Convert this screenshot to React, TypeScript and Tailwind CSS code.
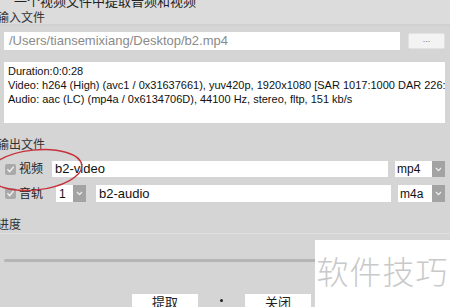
import React from "react";

const font = { fontFamily: '"Liberation Sans", "Noto Sans CJK SC", sans-serif' };

function Check() {
  return (
    <div className="w-[11px] h-[11px] rounded-[2px] bg-[#a9a9a9] flex items-center justify-center shrink-0">
      <svg width="9" height="9" viewBox="0 0 10 10">
        <path d="M2 5.2 L4.2 7.4 L8.2 2.4" stroke="#f2f2f2" strokeWidth="1.6" fill="none" strokeLinecap="round" strokeLinejoin="round" />
      </svg>
    </div>
  );
}

function Arrow() {
  return (
    <div className="w-[13px] self-stretch bg-[#a3a3a3] flex items-center justify-center">
      <svg width="7" height="5" viewBox="0 0 7 5">
        <path d="M1 1 L3.5 3.6 L6 1" stroke="#f0f0f0" strokeWidth="1.2" fill="none" />
      </svg>
    </div>
  );
}

export default function App() {
  return (
    <div className="relative w-[450px] h-[307px] overflow-hidden bg-[#d5d5d5]" style={font}>
      <div className="bg-[#dcdcdc]">
        <div className="h-[12px] overflow-hidden">
          <div className="text-[13px] leading-[13px] -mt-[5px] pl-[14px] text-[#222]">一个视频文件中提取音频和视频</div>
        </div>
        <div className="h-[12px] text-[12px] leading-[12px] -ml-[3px] text-[#333]">输入文件</div>
      </div>
      <div className="h-[2px] bg-[#d0d0d0]" />

      <div className="flex items-center mt-[6px] h-[18px] pl-[4px] pr-[5px]">
        <div className="w-[396px] h-[18px] bg-white flex items-center pl-[5px] text-[13px] text-[#8a8a8a]">
          /Users/tiansemixiang/Desktop/b2.mp4
        </div>
        <div className="ml-[8px] w-[37px] h-[16px] bg-[#f3f3f3] border border-[#e2e2e2] rounded-[2px] flex items-center justify-center text-[9px] text-[#777] leading-none pb-[3px]">
          ...
        </div>
      </div>

      <div className="mt-[12px] mx-[4px] mr-[5px] h-[61px] bg-white overflow-hidden pl-[4px] pt-[2px] text-[11px] leading-[14px] text-[#111] whitespace-nowrap">
        <div>Duration:0:0:28</div>
        <div>Video: h264 (High) (avc1 / 0x31637661), yuv420p, 1920x1080 [SAR 1017:1000 DAR 226:</div>
        <div>Audio: aac (LC) (mp4a / 0x6134706D), 44100 Hz, stereo, fltp, 151 kb/s</div>
      </div>

      <div className="mt-[16px] h-[12px] text-[12px] leading-[12px] -ml-[3px] text-[#333]">输出文件</div>

      <div className="mt-[10px] h-[16px] flex items-center pl-[5px] pr-[5px]">
        <Check />
        <div className="ml-[3px] w-[33px] text-[12px] text-[#222]">视频</div>
        <div className="w-[336px] h-[16px] bg-white flex items-center pl-[3px] text-[13px] text-[#111]">b2-video</div>
        <div className="ml-[7px] flex h-[16px] flex-1">
          <div className="flex-1 bg-white flex items-center pl-[2px] text-[12px] text-[#111]">mp4</div>
          <Arrow />
        </div>
      </div>

      <div className="mt-[8px] h-[17px] flex items-center pl-[5px] pr-[5px]">
        <Check />
        <div className="ml-[3px] w-[37px] text-[12px] text-[#222]">音轨</div>
        <div className="flex h-[17px]">
          <div className="w-[17px] bg-white flex items-center pl-[3px] text-[12px] text-[#111]">1</div>
          <Arrow />
        </div>
        <div className="ml-[10px] w-[295px] h-[17px] bg-white flex items-center pl-[3px] text-[13px] text-[#111]">b2-audio</div>
        <div className="ml-[7px] flex h-[17px] flex-1">
          <div className="flex-1 bg-white flex items-center pl-[2px] text-[12px] text-[#111]">m4a</div>
          <Arrow />
        </div>
      </div>

      <div className="mt-[17px] h-[12px] text-[12px] leading-[12px] -ml-[3px] text-[#333]">进度</div>
      <div className="mt-[2px] h-[1px] bg-[#e0e0e0]" />

      <div className="mt-[25px] mx-[4px] h-[3px] rounded-full bg-[#b5b5b5]" />

      <div className="mt-[32px] flex items-start pl-[132px]">
        <div className="w-[66px] h-[16px] bg-white flex items-center justify-center text-[13px] text-[#222] pt-[2px]">提取</div>
        <div className="w-[47px] flex justify-center pt-[5px]">
          <div className="w-[3px] h-[3px] rounded-full bg-[#222]" />
        </div>
        <div className="w-[66px] h-[16px] bg-white flex items-center justify-center text-[13px] text-[#222] pt-[2px]">关闭</div>
      </div>

      <svg className="absolute left-0 top-0" width="450" height="307" style={{ pointerEvents: "none" }}>
        <ellipse cx="35" cy="170" rx="47" ry="20" transform="rotate(-6 35 170)" fill="none" stroke="#c7313b" strokeWidth="1.4" />
      </svg>

      <div className="absolute left-[315px] top-[240px] w-[135px] h-[67px] bg-white flex items-start justify-center pt-[12px]">
        <span className="text-[32px] leading-[36px] text-[#c9c9c9] tracking-[1px]" style={{ fontFamily: '"Noto Sans CJK SC", sans-serif', fontWeight: 300 }}>软件技巧</span>
      </div>
    </div>
  );
}
